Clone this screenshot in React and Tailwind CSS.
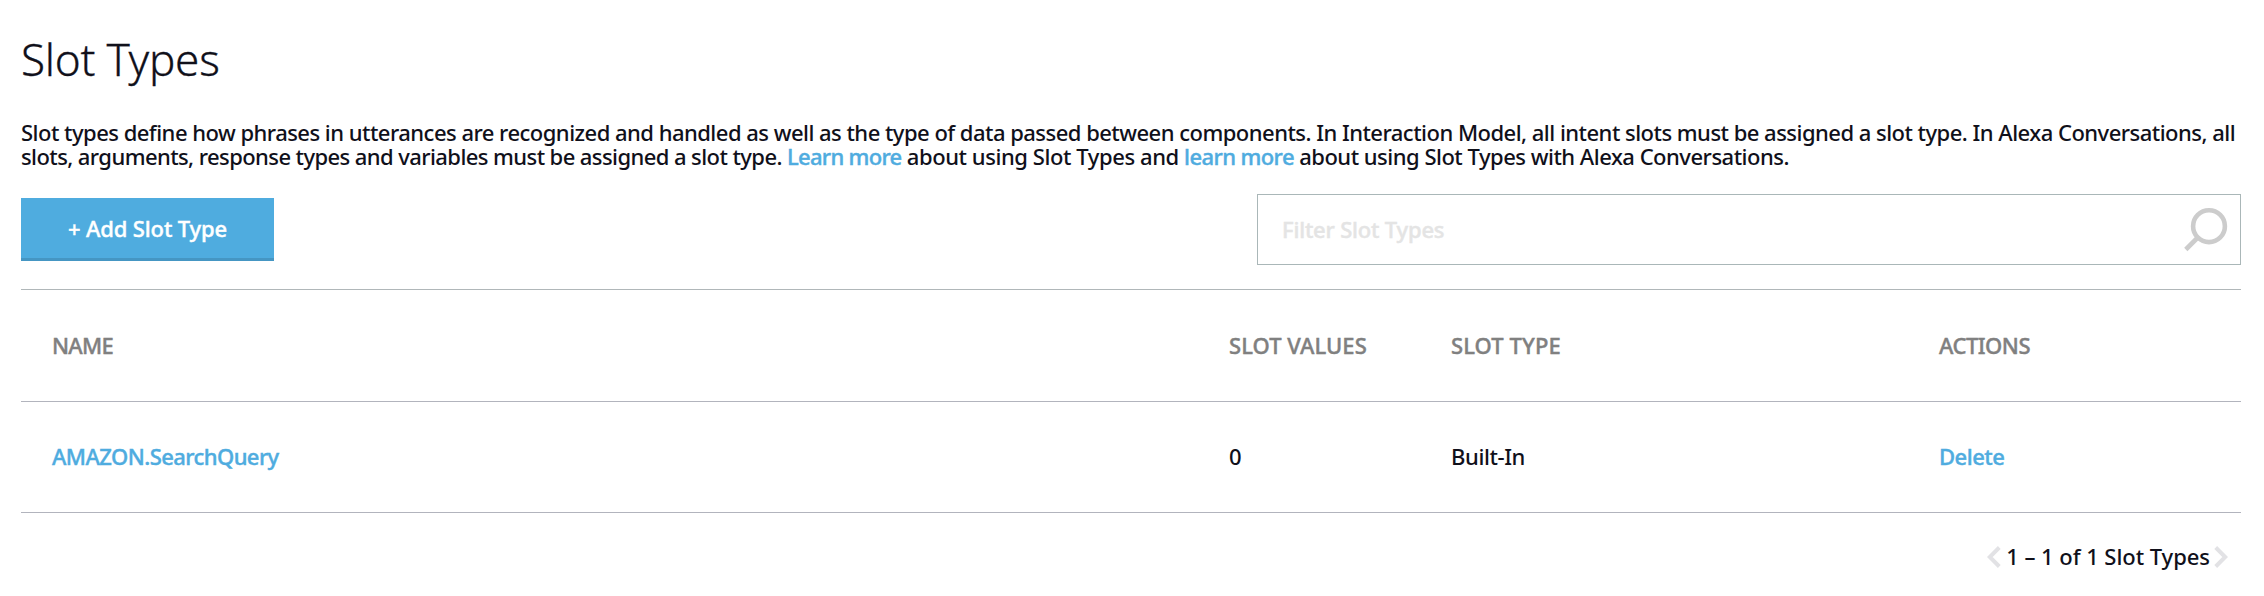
const columns = "grid grid-cols-[1177px_222px_488px_1fr] items-center pl-[31px] pb-0.5";
const link = "text-[#4facdf] [-webkit-text-stroke:0.4px]";

function SearchIcon() {
  return (
    <svg className="h-[46px] w-[46px]" viewBox="0 0 46 46" fill="none" stroke="#cccccc" strokeWidth="4.6">
      <circle cx="26" cy="20.2" r="15.9" />
      <path d="M14.8 31.5 L2.8 43.5" />
    </svg>
  );
}

function Chevron({ d }) {
  return (
    <svg className="h-[22px] w-[14px]" viewBox="0 0 14 22" fill="none" stroke="#e2e2e5" strokeWidth="4">
      <path d={d} />
    </svg>
  );
}

export default function App() {
  return (
    <div className="flex min-h-[596px] w-[2264px] flex-col bg-white pl-[21px] pr-[23px] pt-[31px] font-['Noto_Sans',sans-serif] text-[22px] leading-6 font-medium text-[#10101a]">
      <h1 className="text-[44px] leading-[56px] font-light tracking-[-0.25px] [-webkit-text-stroke:0.3px]">Slot Types</h1>

      <p className="mt-[33px] whitespace-nowrap">
        <span className="tracking-[-0.52px]">
          Slot types define how phrases in utterances are recognized and handled as well as the type of data passed between components. In Interaction Model, all intent slots must be assigned a slot type. In Alexa Conversations, all
        </span>
        <br />
        <span className="tracking-[-0.58px]">
          slots, arguments, response types and variables must be assigned a slot type.{" "}
        </span>
        <a className={`${link} tracking-[-0.7px]`}>Learn more</a>
        <span className="tracking-[-0.43px]"> about using Slot Types and </span>
        <a className={`${link} tracking-[-0.58px]`}>learn more</a>
        <span className="tracking-[-0.5px]"> about using Slot Types with Alexa Conversations.</span>
      </p>

      <div className="mt-[26px] flex h-[71px] items-center justify-between">
        <button className="mb-px h-[63px] w-[253px] border-b-3 border-[#4596c3] bg-[#4facdf] tracking-[-0.15px] text-white [-webkit-text-stroke:0.4px]">
          + Add Slot Type
        </button>
        <div className="flex h-[71px] w-[984px] items-center justify-between border border-[#aab7b8] pb-0.5 pl-6 pr-[11px]">
          <span className="tracking-[-0.2px] text-[#e4e4e4] [-webkit-text-stroke:0.4px]">Filter Slot Types</span>
          <SearchIcon />
        </div>
      </div>

      <div className="mt-6 border-t border-[#b0b7b9]">
        <div className={`${columns} h-[112px] border-b border-[#b2b4bd] text-[#808080] [-webkit-text-stroke:0.4px]`}>
          <span className="tracking-[-0.7px]">NAME</span>
          <span className="tracking-[0.05px]">SLOT VALUES</span>
          <span className="tracking-[0.1px]">SLOT TYPE</span>
          <span className="tracking-[-0.5px]">ACTIONS</span>
        </div>
        <div className={`${columns} h-[111px] border-b border-[#b2b4bd]`}>
          <a className={`${link} tracking-[-0.58px]`}>AMAZON.SearchQuery</a>
          <span>0</span>
          <span className="tracking-[-0.4px]">Built-In</span>
          <a className={`${link} tracking-[-0.5px]`}>Delete</a>
        </div>
      </div>

      <div className="mt-[31px] flex items-center justify-end pr-[13px]">
        <Chevron d="M12.3 1.5 L2.8 11 L12.3 20.5" />
        <span className="mb-px ml-[5px] mr-[4px] tracking-[-0.05px]">1 – 1 of 1 Slot Types</span>
        <Chevron d="M1.7 1.5 L11.2 11 L1.7 20.5" />
      </div>
    </div>
  );
}
